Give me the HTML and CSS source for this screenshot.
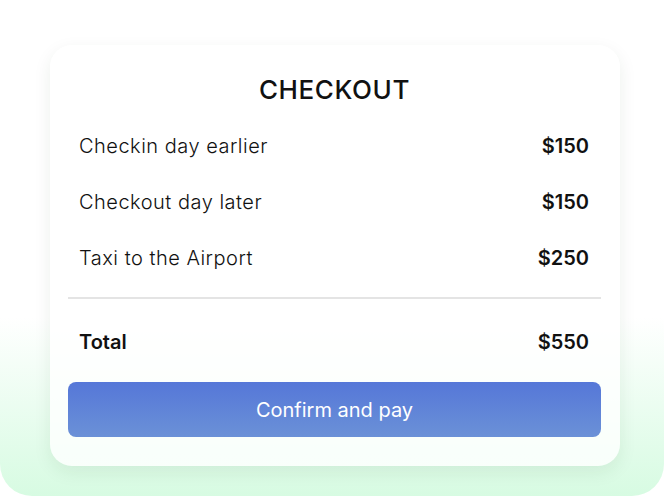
FILE: index.html
```html
<!DOCTYPE html>
<html lang="en">
<head>
    <meta charset="UTF-8">
    <meta name="viewport" content="width=device-width, initial-scale=1.0">
    <title>Checkout</title>
    <link rel="stylesheet" href="styles.css">
</head>
<body>

    <div class="page">
        <div class="card">
            <h1>CHECKOUT</h1>

            <div class="row">
                <span>Checkin day earlier</span>
                <strong>$150</strong>
            </div>
            <div class="row">
                <span>Checkout day later</span>
                <strong>$150</strong>
            </div>
            <div class="row">
                <span>Taxi to the Airport</span>
                <strong>$250</strong>
            </div>

            <hr class="divider">

            <div class="row total">
                <span>Total</span>
                <strong>$550</strong>
            </div>

            <button class="pay-btn">Confirm and pay</button>
        </div>
    </div>

</body>
</html>
```

FILE: styles.css
```css
body {
    margin: 0;
    font-family: Inter, "Noto Sans", sans-serif;
    color: #111;
}
.page {
    height: 496px;
    overflow: hidden;
    background: linear-gradient(to bottom, #ffffff 0%, #ffffff 64%, #d7fbe2 100%);
    border-radius: 0 0 32px 32px;
    padding-top: 45px;
    box-sizing: border-box;
}
.card {
    width: 570px;
    margin-left: 50px;
    box-sizing: border-box;
    padding: 28px 19px 29px 18px;
    background-color: rgba(255, 255, 255, 0.8);
    border-radius: 22px;
    box-shadow: 0 6px 18px rgba(20, 60, 30, 0.08);
}
h1 {
    margin: 0 0 11px;
    font-size: 26px;
    line-height: 34px;
    font-weight: 500;
    text-align: center;
    letter-spacing: 0.6px;
}
.row {
    display: flex;
    justify-content: space-between;
    align-items: center;
    height: 56px;
    padding: 0 12px 0 11px;
    font-size: 20px;
}
.row span {
    font-weight: 300;
    letter-spacing: 0.5px;
}
.row strong {
    font-weight: 600;
}
.divider {
    margin: 11px 0 0;
    border: none;
    height: 2px;
    background-color: #e4e4e4;
}
.total {
    margin-top: 15px;
}
.total span {
    font-weight: 600;
    letter-spacing: 0;
}
.pay-btn {
    display: block;
    width: 100%;
    height: 55px;
    margin-top: 12px;
    border: none;
    border-radius: 8px;
    background: linear-gradient(to bottom, #5577d8, #6b91d7);
    color: #fff;
    font-family: inherit;
    font-size: 20px;
    cursor: pointer;
}
```
